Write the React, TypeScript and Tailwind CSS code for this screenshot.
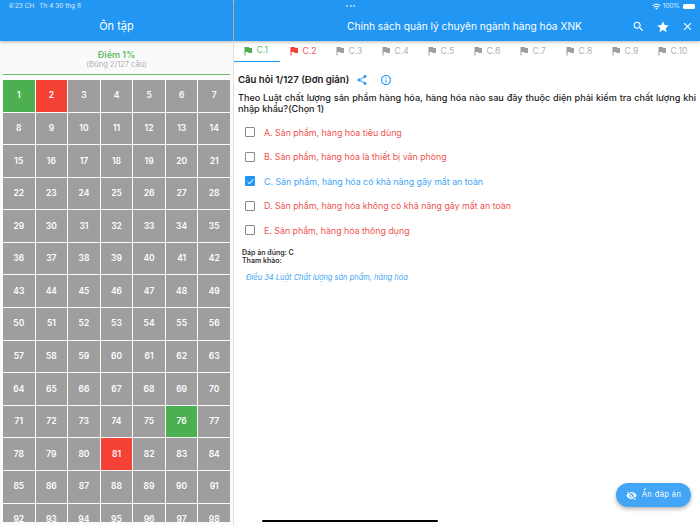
import { MdSearch, MdStar, MdClose, MdShare, MdInfoOutline, MdFlag, MdCheck, MdVisibilityOff, MdWifi } from "react-icons/md";

const GREEN_CELLS = [1, 76];
const RED_CELLS = [2, 81];

const tabs = [
  { label: "C.1", flag: "text-[#4caf50]", text: "text-[#66bb6a]" },
  { label: "C.2", flag: "text-[#f44336]", text: "text-[#ef5350]" },
  { label: "C.3", flag: "text-[#9e9e9e]", text: "text-[#b0b0b0]" },
  { label: "C.4", flag: "text-[#9e9e9e]", text: "text-[#b0b0b0]" },
  { label: "C.5", flag: "text-[#9e9e9e]", text: "text-[#b0b0b0]" },
  { label: "C.6", flag: "text-[#9e9e9e]", text: "text-[#b0b0b0]" },
  { label: "C.7", flag: "text-[#9e9e9e]", text: "text-[#b0b0b0]" },
  { label: "C.8", flag: "text-[#9e9e9e]", text: "text-[#b0b0b0]" },
  { label: "C.9", flag: "text-[#9e9e9e]", text: "text-[#b0b0b0]" },
  { label: "C.10", flag: "text-[#9e9e9e]", text: "text-[#b0b0b0]" },
];

const answers = [
  "A. Sản phẩm, hàng hóa tiêu dùng",
  "B. Sản phẩm, hàng hóa là thiết bị văn phòng",
  "C. Sản phẩm, hàng hóa có khả năng gây mất an toàn",
  "D. Sản phẩm, hàng hóa không có khả năng gây mất an toàn",
  "E. Sản phẩm, hàng hóa thông dụng",
];

function cellColor(n: number) {
  if (GREEN_CELLS.includes(n)) return "bg-[#4caf50]";
  if (RED_CELLS.includes(n)) return "bg-[#f44336]";
  return "bg-[#9e9e9e]";
}

export default function App() {
  const cells = Array.from({ length: 98 }, (_, i) => i + 1);

  return (
    <div className="flex h-[525px] w-[700px] overflow-hidden bg-white font-['Inter','Liberation_Sans',sans-serif]">
      {/* Left panel */}
      <div className="flex h-full w-[233px] shrink-0 flex-col bg-[#fafafa]">
        <div className="z-10 flex h-[41px] shrink-0 flex-col bg-[#2196f3] shadow-[0_1px_3px_rgba(0,0,0,0.3)]">
          <div className="flex h-[13px] items-center gap-[5px] pl-[9px] text-[6.5px] text-white/80">
            <span>6:23 CH</span>
            <span>Th 4 30 thg 8</span>
          </div>
          <div className="flex flex-1 items-center justify-center pb-[1px] text-[11px] text-white">Ôn tập</div>
        </div>

        <div className="mx-[3px] flex h-[34px] shrink-0 flex-col items-center justify-end border-b-[1.5px] border-[#66bb6a] pb-[4px]">
          <div className="text-[9px] leading-[11px] font-semibold text-[#66bb6a]">Điểm 1%</div>
          <div className="text-[7.5px] leading-[10px] text-[#b0b0b0]">(Đúng 2/127 câu)</div>
        </div>

        <div className="mx-[3px] mt-[5px] h-[442px] overflow-hidden">
          <div className="grid grid-cols-7 gap-px">
            {cells.map((n) => (
              <div
                key={n}
                className={`flex aspect-square items-center justify-center text-[8.5px] font-semibold text-white ${cellColor(n)}`}
              >
                {n}
              </div>
            ))}
          </div>
        </div>
      </div>

      {/* Right panel */}
      <div className="relative flex h-full flex-1 flex-col border-l border-[#e0e0e0] bg-white">
        <div className="relative z-10 flex h-[41px] shrink-0 flex-col bg-[#2196f3] shadow-[0_1px_3px_rgba(0,0,0,0.3)]">
          <div className="flex h-[13px] items-center justify-end gap-[2px] pr-[5px] text-[6.5px] text-white/80">
            <MdWifi size={9} className="text-white" />
            <span>100%</span>
            <div className="ml-[1px] h-[5px] w-[12px] rounded-[1.5px] bg-white" />
          </div>
          <div className="absolute top-[5px] left-[112px] flex gap-[1.5px]">
            <div className="h-[2px] w-[2px] rounded-full bg-white/70" />
            <div className="h-[2px] w-[2px] rounded-full bg-white/70" />
            <div className="h-[2px] w-[2px] rounded-full bg-white/70" />
          </div>
          <div className="flex flex-1 items-center pb-[1px] pl-[113px] text-[10.2px] text-white">
            <span>Chính sách quản lý chuyên ngành hàng hóa XNK</span>
            <div className="ml-auto flex items-center gap-[11px] pr-[6px]">
              <MdSearch size={13} />
              <MdStar size={14} />
              <MdClose size={13} />
            </div>
          </div>
        </div>

        <div className="flex h-[21px] shrink-0">
          {tabs.map((tab, i) => (
            <div
              key={tab.label}
              className={`flex h-full w-[46px] shrink-0 items-center gap-[2.5px] pb-[1px] pl-[8px] text-[8.5px] ${i === 0 ? "border-b-[1.5px] border-[#2196f3]" : ""}`}
            >
              <MdFlag size={12} className={`shrink-0 ${tab.flag}`} />
              <span className={`whitespace-nowrap ${tab.text}`}>{tab.label}</span>
            </div>
          ))}
        </div>

        <div className="flex items-center pt-[11px] pl-[4px]">
          <span className="text-[9.6px] leading-[13px] font-semibold text-[#212121]">Câu hỏi 1/127 (Đơn giản)</span>
          <MdShare size={12} className="ml-[7px] text-[#2196f3]" />
          <MdInfoOutline size={12} className="ml-[12px] text-[#2196f3]" />
        </div>

        <p className="mt-[6px] px-[4px] text-justify text-[9.1px] leading-[11px] font-medium text-[#212121]">
          Theo Luật chất lượng sản phẩm hàng hóa, hàng hóa nào sau đây thuộc diện phải kiểm tra chất lượng khi nhập khẩu?(Chọn 1)
        </p>

        <div className="mt-[6px] flex flex-col">
          {answers.map((answer, i) => (
            <div key={answer} className="flex h-[24.5px] items-center pl-[11px]">
              {i === 2 ? (
                <div className="flex h-[10px] w-[10px] items-center justify-center rounded-[1px] bg-[#2196f3]">
                  <MdCheck size={9} className="text-white" />
                </div>
              ) : (
                <div className="h-[10px] w-[10px] rounded-[1px] border-[1.5px] border-[#8a8a8a]" />
              )}
              <span className={`ml-[9px] text-[8.8px] ${i === 2 ? "text-[#42a5f5]" : "text-[#ef5350]"}`}>{answer}</span>
            </div>
          ))}
        </div>

        <div className="mt-[6px] pl-[8px] text-[7px] leading-[8.5px] font-semibold text-[#333333]">
          <div>Đáp án đúng: C</div>
          <div>Tham khảo:</div>
        </div>

        <div className="mt-[6px] pl-[12px] text-[7.5px] text-[#42a5f5] italic">Điều 34 Luật Chất lượng sản phẩm, hàng hóa</div>

        <div className="absolute right-[9px] bottom-[18px] flex h-[24px] w-[75px] items-center justify-center gap-[5px] rounded-full bg-[#42a5f5] text-[7.5px] text-white shadow-[0_2px_4px_rgba(0,0,0,0.3)]">
          <MdVisibilityOff size={11} />
          <span className="tracking-[0.4px]">Ẩn đáp án</span>
        </div>

        <div className="absolute bottom-[3px] left-[28px] h-[2.5px] w-[176px] rounded-full bg-black" />
      </div>
    </div>
  );
}
